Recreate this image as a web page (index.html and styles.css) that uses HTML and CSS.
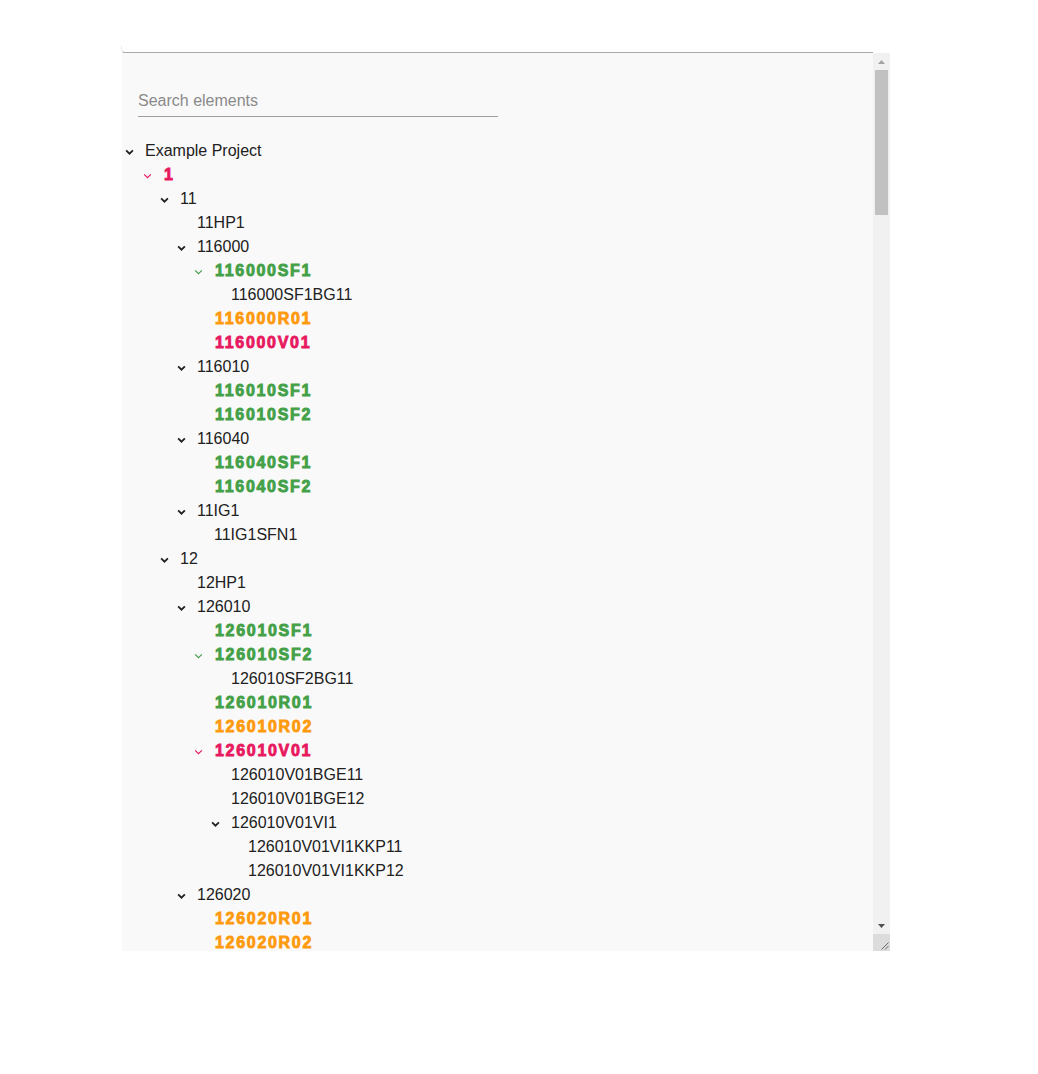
FILE: index.html
```html
<!DOCTYPE html>
<html lang="en">
<head>
<meta charset="utf-8">
<title>Element tree</title>
<link rel="stylesheet" href="styles.css">
</head>
<body>
<div class="page">
  <div class="card-edge"></div>
  <div class="panel">
    <div class="content">
      <div class="search">
        <input class="search-input" type="text" placeholder="Search elements">
      </div>
      <div class="tree">
        <div class="row l0"><span class="tg"><svg class="chev" viewBox="0 0 8 5"><path d="M1 1l3 3 3-3"/></svg></span><span class="lbl">Example Project</span></div>
        <div class="row l1 pink"><span class="tg"><svg class="chev" viewBox="0 0 8 5"><path d="M1 1l3 3 3-3"/></svg></span><span class="lbl">1</span></div>
        <div class="row l2"><span class="tg"><svg class="chev" viewBox="0 0 8 5"><path d="M1 1l3 3 3-3"/></svg></span><span class="lbl">11</span></div>
        <div class="row l3"><span class="tg"></span><span class="lbl">11HP1</span></div>
        <div class="row l3"><span class="tg"><svg class="chev" viewBox="0 0 8 5"><path d="M1 1l3 3 3-3"/></svg></span><span class="lbl">116000</span></div>
        <div class="row l4 green"><span class="tg"><svg class="chev" viewBox="0 0 8 5"><path d="M1 1l3 3 3-3"/></svg></span><span class="lbl">116000SF1</span></div>
        <div class="row l5"><span class="tg"></span><span class="lbl">116000SF1BG11</span></div>
        <div class="row l4 orange"><span class="tg"></span><span class="lbl">116000R01</span></div>
        <div class="row l4 pink"><span class="tg"></span><span class="lbl">116000V01</span></div>
        <div class="row l3"><span class="tg"><svg class="chev" viewBox="0 0 8 5"><path d="M1 1l3 3 3-3"/></svg></span><span class="lbl">116010</span></div>
        <div class="row l4 green"><span class="tg"></span><span class="lbl">116010SF1</span></div>
        <div class="row l4 green"><span class="tg"></span><span class="lbl">116010SF2</span></div>
        <div class="row l3"><span class="tg"><svg class="chev" viewBox="0 0 8 5"><path d="M1 1l3 3 3-3"/></svg></span><span class="lbl">116040</span></div>
        <div class="row l4 green"><span class="tg"></span><span class="lbl">116040SF1</span></div>
        <div class="row l4 green"><span class="tg"></span><span class="lbl">116040SF2</span></div>
        <div class="row l3"><span class="tg"><svg class="chev" viewBox="0 0 8 5"><path d="M1 1l3 3 3-3"/></svg></span><span class="lbl">11IG1</span></div>
        <div class="row l4"><span class="tg"></span><span class="lbl">11IG1SFN1</span></div>
        <div class="row l2"><span class="tg"><svg class="chev" viewBox="0 0 8 5"><path d="M1 1l3 3 3-3"/></svg></span><span class="lbl">12</span></div>
        <div class="row l3"><span class="tg"></span><span class="lbl">12HP1</span></div>
        <div class="row l3"><span class="tg"><svg class="chev" viewBox="0 0 8 5"><path d="M1 1l3 3 3-3"/></svg></span><span class="lbl">126010</span></div>
        <div class="row l4 green"><span class="tg"></span><span class="lbl">126010SF1</span></div>
        <div class="row l4 green"><span class="tg"><svg class="chev" viewBox="0 0 8 5"><path d="M1 1l3 3 3-3"/></svg></span><span class="lbl">126010SF2</span></div>
        <div class="row l5"><span class="tg"></span><span class="lbl">126010SF2BG11</span></div>
        <div class="row l4 green"><span class="tg"></span><span class="lbl">126010R01</span></div>
        <div class="row l4 orange"><span class="tg"></span><span class="lbl">126010R02</span></div>
        <div class="row l4 pink"><span class="tg"><svg class="chev" viewBox="0 0 8 5"><path d="M1 1l3 3 3-3"/></svg></span><span class="lbl">126010V01</span></div>
        <div class="row l5"><span class="tg"></span><span class="lbl">126010V01BGE11</span></div>
        <div class="row l5"><span class="tg"></span><span class="lbl">126010V01BGE12</span></div>
        <div class="row l5"><span class="tg"><svg class="chev" viewBox="0 0 8 5"><path d="M1 1l3 3 3-3"/></svg></span><span class="lbl">126010V01VI1</span></div>
        <div class="row l6"><span class="tg"></span><span class="lbl">126010V01VI1KKP11</span></div>
        <div class="row l6"><span class="tg"></span><span class="lbl">126010V01VI1KKP12</span></div>
        <div class="row l3"><span class="tg"><svg class="chev" viewBox="0 0 8 5"><path d="M1 1l3 3 3-3"/></svg></span><span class="lbl">126020</span></div>
        <div class="row l4 orange"><span class="tg"></span><span class="lbl">126020R01</span></div>
        <div class="row l4 orange"><span class="tg"></span><span class="lbl">126020R02</span></div>
      </div>
    </div>
    <div class="vscroll">
      <div class="sb-btn"><svg class="sb-arrow" viewBox="0 0 7 4"><polygon points="3.5,0 7,4 0,4" fill="#a3a3a3"/></svg></div>
      <div class="sb-track"><div class="sb-thumb"></div></div>
      <div class="sb-btn"><svg class="sb-arrow" viewBox="0 0 7 4"><polygon points="0,0 7,0 3.5,4" fill="#505050"/></svg></div>
      <div class="sb-resizer"><svg class="grip" viewBox="0 0 17 17"><path d="M15.5 8.5 L8.5 15.5 M15.5 12 L12 15.5" stroke="#6a6a6a" stroke-width="1" fill="none"/></svg></div>
    </div>
  </div>
</div>
</body>
</html>
```
FILE: styles.css
```css
html, body {
  margin: 0;
  padding: 0;
  background: #ffffff;
}
.page {
  padding: 46px 0 0 122px;
}
.card-edge {
  width: 752px;
  height: 7px;
  box-sizing: border-box;
  margin-left: -1px;
  border-bottom: 1px solid #a9a9a9;
  border-left: 1px solid #ececec;
  border-bottom-left-radius: 4px;
}
.panel {
  display: flex;
  width: 768px;
  height: 898px;
  background: #f9f9f9;
}
.content {
  flex: 1;
  min-width: 0;
  overflow: hidden;
}
.vscroll {
  flex: none;
  width: 17px;
  display: flex;
  flex-direction: column;
  background: #f1f1f1;
}
.sb-btn {
  flex: none;
  height: 17px;
  display: flex;
  align-items: center;
  justify-content: center;
}
.sb-arrow {
  width: 7px;
  height: 4px;
}
.sb-track {
  flex: 1;
}
.sb-thumb {
  height: 145px;
  margin: 0 2px;
  background: #c1c1c1;
}
.sb-resizer {
  flex: none;
  height: 17px;
  background: #dcdcdc;
}
.grip {
  display: block;
  width: 17px;
  height: 17px;
}
.search {
  padding: 35px 0 0 16px;
}
.search-input {
  display: block;
  width: 360px;
  height: 29px;
  box-sizing: border-box;
  margin: 0;
  padding: 0 0 2px 0;
  border: none;
  border-bottom: 1px solid #9e9e9e;
  background: transparent;
  font-family: "Liberation Sans", Arial, sans-serif;
  font-size: 16px;
  color: #222;
  outline: none;
}
.search-input::placeholder {
  color: #8a8a8a;
}
.tree {
  padding-top: 22px;
  font-family: "Liberation Sans", Arial, sans-serif;
  font-size: 16px;
  color: #212121;
}
.row {
  display: flex;
  align-items: center;
  height: 24px;
  white-space: nowrap;
}
.tg {
  flex: none;
  width: 23px;
  height: 24px;
  display: flex;
  align-items: center;
}
.chev {
  width: 9px;
  height: 6px;
  margin-left: 3px;
  margin-top: 2px;
  overflow: visible;
}
.chev path {
  fill: none;
  stroke: currentColor;
  stroke-width: 1.6;
}
.pink .chev path,
.green .chev path,
.orange .chev path {
  stroke-width: 1;
}
.lbl {
  line-height: 24px;
}
.pink .lbl, .green .lbl, .orange .lbl {
  padding-left: 1px;
}
.pink, .green, .orange {
  font-weight: 700;
  letter-spacing: 1.7px;
  -webkit-text-stroke: 0.85px currentColor;
}
.pink { color: #e8185e; }
.green { color: #43a047; }
.orange { color: #ff9a0d; }
.l0 { padding-left: 0; }
.l1 { padding-left: 18px; }
.l2 { padding-left: 35px; }
.l3 { padding-left: 52px; }
.l4 { padding-left: 69px; }
.l5 { padding-left: 86px; }
.l6 { padding-left: 103px; }
```
